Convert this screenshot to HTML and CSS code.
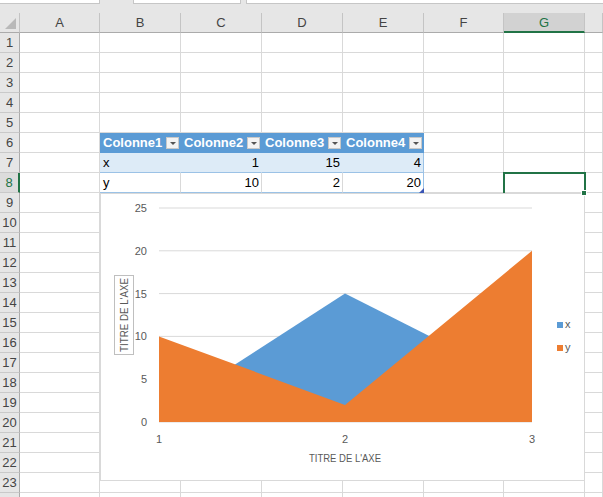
FILE: index.html
```html
<!DOCTYPE html>
<html lang="fr">

<head>
  <meta charset="UTF-8" />
  <meta name="viewport" content="width=device-width, initial-scale=1.0" />
  <title>Feuil1</title>
  <link rel="stylesheet" href="styles.css">
</head>

<body>
  <!-- barre de formule -->
  <div class="topbar">
    <div class="namebox"></div>
    <div class="btns"></div>
    <div class="formula"></div>
  </div>

  <div class="sheet">
    <!-- en-tetes de colonnes -->
    <div class="row head">
      <div class="corner"></div>
      <div>A</div>
      <div>B</div>
      <div>C</div>
      <div>D</div>
      <div>E</div>
      <div>F</div>
      <div class="sel">G</div>
      <div></div>
    </div>

    <div class="row"><div class="rh">1</div><div></div><div></div><div></div><div></div><div></div><div></div><div></div><div></div></div>
    <div class="row"><div class="rh">2</div><div></div><div></div><div></div><div></div><div></div><div></div><div></div><div></div></div>
    <div class="row"><div class="rh">3</div><div></div><div></div><div></div><div></div><div></div><div></div><div></div><div></div></div>
    <div class="row"><div class="rh">4</div><div></div><div></div><div></div><div></div><div></div><div></div><div></div><div></div></div>
    <div class="row"><div class="rh">5</div><div></div><div></div><div></div><div></div><div></div><div></div><div></div><div></div></div>

    <!-- tableau -->
    <div class="row">
      <div class="rh">6</div>
      <div></div>
      <div class="th">Colonne1<span class="dd"></span></div>
      <div class="th">Colonne2<span class="dd"></span></div>
      <div class="th">Colonne3<span class="dd"></span></div>
      <div class="th">Colonne4<span class="dd"></span></div>
      <div></div><div></div><div></div>
    </div>
    <div class="row">
      <div class="rh">7</div>
      <div></div>
      <div class="td band">x</div>
      <div class="td band num">1</div>
      <div class="td band num">15</div>
      <div class="td band num last">4</div>
      <div></div><div></div><div></div>
    </div>
    <div class="row">
      <div class="rh cur">8</div>
      <div></div>
      <div class="td">y</div>
      <div class="td num">10</div>
      <div class="td num">2</div>
      <div class="td num last">20</div>
      <div></div><div></div><div></div>
    </div>

    <div class="row"><div class="rh">9</div><div></div><div></div><div></div><div></div><div></div><div></div><div></div><div></div></div>
    <div class="row"><div class="rh">10</div><div></div><div></div><div></div><div></div><div></div><div></div><div></div><div></div></div>
    <div class="row"><div class="rh">11</div><div></div><div></div><div></div><div></div><div></div><div></div><div></div><div></div></div>
    <div class="row"><div class="rh">12</div><div></div><div></div><div></div><div></div><div></div><div></div><div></div><div></div></div>
    <div class="row"><div class="rh">13</div><div></div><div></div><div></div><div></div><div></div><div></div><div></div><div></div></div>
    <div class="row"><div class="rh">14</div><div></div><div></div><div></div><div></div><div></div><div></div><div></div><div></div></div>
    <div class="row"><div class="rh">15</div><div></div><div></div><div></div><div></div><div></div><div></div><div></div><div></div></div>
    <div class="row"><div class="rh">16</div><div></div><div></div><div></div><div></div><div></div><div></div><div></div><div></div></div>
    <div class="row"><div class="rh">17</div><div></div><div></div><div></div><div></div><div></div><div></div><div></div><div></div></div>
    <div class="row"><div class="rh">18</div><div></div><div></div><div></div><div></div><div></div><div></div><div></div><div></div></div>
    <div class="row"><div class="rh">19</div><div></div><div></div><div></div><div></div><div></div><div></div><div></div><div></div></div>
    <div class="row"><div class="rh">20</div><div></div><div></div><div></div><div></div><div></div><div></div><div></div><div></div></div>
    <div class="row"><div class="rh">21</div><div></div><div></div><div></div><div></div><div></div><div></div><div></div><div></div></div>
    <div class="row"><div class="rh">22</div><div></div><div></div><div></div><div></div><div></div><div></div><div></div><div></div></div>
    <div class="row"><div class="rh">23</div><div></div><div></div><div></div><div></div><div></div><div></div><div></div><div></div></div>
    <!-- ligne 24 a peine visible en bas -->
    <div class="row"><div class="rh"></div><div></div><div></div><div></div><div></div><div></div><div></div><div></div><div></div></div>

    <!-- cellule active G8 -->
    <div class="selection"></div>
    <span class="resize"></span>

    <!-- graphique en aires -->
    <div class="chart">
      <svg width="483" height="286" viewBox="0 0 483 286">
        <g class="grid">
          <line x1="58" y1="14" x2="431" y2="14" />
          <line x1="58" y1="56.8" x2="431" y2="56.8" />
          <line x1="58" y1="99.6" x2="431" y2="99.6" />
          <line x1="58" y1="142.4" x2="431" y2="142.4" />
          <line x1="58" y1="185.2" x2="431" y2="185.2" />
          <line x1="58" y1="228" x2="431" y2="228" />
        </g>
        <polygon fill="#5b9bd5" points="58,228 58,219.4 244,99.6 431,193.8 431,228" />
        <polygon fill="#ed7d31" points="58,228 58,142.4 244,210.9 431,56.8 431,228" />

        <g class="lbl" text-anchor="end">
          <text x="46" y="18">25</text>
          <text x="46" y="60.8">20</text>
          <text x="46" y="103.6">15</text>
          <text x="46" y="146.4">10</text>
          <text x="46" y="189.2">5</text>
          <text x="46" y="232">0</text>
        </g>
        <g class="lbl" text-anchor="middle">
          <text x="58" y="249">1</text>
          <text x="244" y="249">2</text>
          <text x="431" y="249">3</text>
          <text x="244" y="268" textLength="72" lengthAdjust="spacingAndGlyphs">TITRE DE L'AXE</text>
        </g>

        <rect class="ytitle" x="13.5" y="81.5" width="19" height="79" />
        <text class="lbl" text-anchor="middle" transform="translate(27,121) rotate(-90)" textLength="74" lengthAdjust="spacingAndGlyphs">TITRE DE L'AXE</text>

        <rect x="456" y="128" width="6" height="6" fill="#5b9bd5" />
        <text class="lbl" x="464" y="134">x</text>
        <rect x="456" y="151" width="6" height="6" fill="#ed7d31" />
        <text class="lbl" x="464" y="157">y</text>
      </svg>
    </div>

    <span class="handle"></span>
  </div>
</body>

</html>
```

FILE: styles.css
```css
* {
  box-sizing: border-box;
}

body {
  width: 603px;
  height: 497px;
  margin: 0;
  overflow: hidden;
  background-color: #e6e6e6;
  font-family: "Liberation Sans", Arial, sans-serif;
}

/* barre du haut */
.topbar {
  display: flex;
  height: 4px;
}

.topbar div {
  background-color: #fff;
  border: 1px solid #c6c6c6;
  border-top: 0;
}

.namebox {
  width: 101px;
  margin-left: -1px;
}

.btns {
  width: 108px;
  margin-left: 33px;
}

.formula {
  flex: 1;
  margin-left: 5px;
  border-right: 0 !important;
}

/* feuille */
.sheet {
  position: relative;
  margin-top: 9px;
  background-color: #fff;
}

.row {
  display: grid;
  grid-template-columns: 20px 80px 81px 81px 81px 81px 80px 81px 1fr;
  height: 20px;
}

.row > div {
  border-right: 1px solid #d9d9d9;
  border-bottom: 1px solid #d9d9d9;
  font-size: 13px;
  line-height: 20px;
  white-space: nowrap;
  overflow: hidden;
}

/* en-tetes */
.head > div {
  background-color: #e6e6e6;
  border-right-color: #c4c4c4;
  border-bottom-color: #ababab;
  color: #444;
  text-align: center;
}

.head > .sel {
  background-color: #d2d2d2;
  border-bottom: 2px solid #217346;
  color: #217346;
}

.head > .corner {
  position: relative;
}

.corner::after {
  content: "";
  position: absolute;
  right: 3px;
  bottom: 3px;
  border-left: 11px solid transparent;
  border-bottom: 11px solid #b9b9b9;
}

.row > .rh {
  background-color: #e6e6e6;
  border-right-color: #ababab;
  border-bottom-color: #c9c9c9;
  color: #444;
  text-align: center;
}

.row > .cur {
  background-color: #dcdcdc;
  border-right: 2px solid #217346;
  color: #217346;
}

/* tableau */
.row > .th {
  position: relative;
  padding-left: 3px;
  background-color: #5b9bd5;
  border-color: #5b9bd5;
  color: #fff;
  font-weight: bold;
}

.dd {
  position: absolute;
  top: 4px;
  right: 1px;
  width: 13px;
  height: 12px;
  background-color: #f3f3f3;
  border: 1px solid #c8c8c8;
}

.dd::after {
  content: "";
  position: absolute;
  left: 3px;
  top: 4px;
  border-left: 3px solid transparent;
  border-right: 3px solid transparent;
  border-top: 3px solid #555;
}

.row > .td {
  padding: 0 2px 0 3px;
  color: #000;
  border-bottom-color: #9bc2e6;
}

.row > .band {
  background-color: #ddebf7;
  border-right-color: #ddebf7;
}

.row > .last {
  border-right-color: #9bc2e6;
}

.num {
  text-align: right;
}

/* selection */
.selection {
  position: absolute;
  left: 503px;
  top: 159px;
  width: 83px;
  height: 24px;
  border: 2px solid #217346;
}

.handle {
  position: absolute;
  left: 581px;
  top: 177px;
  width: 6px;
  height: 6px;
  background-color: #217346;
  border: 1px solid #fff;
  z-index: 2;
}

.resize {
  position: absolute;
  left: 419px;
  top: 175px;
  border-left: 5px solid transparent;
  border-bottom: 5px solid #3a55b5;
  z-index: 2;
}

/* graphique */
.chart {
  position: absolute;
  left: 100px;
  top: 180px;
  width: 485px;
  height: 288px;
  background-color: #fff;
  border: 1px solid #d9d9d9;
}

.chart svg {
  display: block;
}

.grid line {
  stroke: #d9d9d9;
  stroke-width: 1;
}

.lbl {
  font-family: "Liberation Sans", Arial, sans-serif;
  font-size: 11px;
  fill: #595959;
}

.ytitle {
  fill: none;
  stroke: #bfbfbf;
}
```
